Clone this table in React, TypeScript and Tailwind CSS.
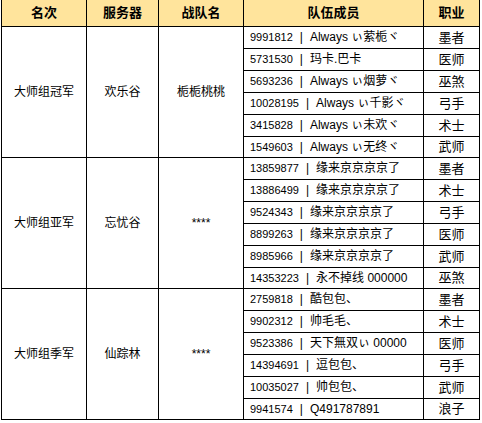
import React from 'react';

type Group = {
  rank: string;
  server: string;
  team: string;
  members: { id: string; name: string; job: string }[];
};

const groups: Group[] = [
  {
    rank: '大师组冠军',
    server: '欢乐谷',
    team: '栀栀桃桃',
    members: [
      { id: '9991812', name: 'Always ぃ萦栀ヾ', job: '墨者' },
      { id: '5731530', name: '玛卡.巴卡', job: '医师' },
      { id: '5693236', name: 'Always ぃ烟萝ヾ', job: '巫煞' },
      { id: '10028195', name: 'Always ぃ千影ヾ', job: '弓手' },
      { id: '3415828', name: 'Always ぃ未欢ヾ', job: '术士' },
      { id: '1549603', name: 'Always ぃ无终ヾ', job: '武师' },
    ],
  },
  {
    rank: '大师组亚军',
    server: '忘忧谷',
    team: '****',
    members: [
      { id: '13859877', name: '缘来京京京京了', job: '墨者' },
      { id: '13886499', name: '缘来京京京京了', job: '术士' },
      { id: '9524343', name: '缘来京京京京了', job: '弓手' },
      { id: '8899263', name: '缘来京京京京了', job: '医师' },
      { id: '8985966', name: '缘来京京京京了', job: '武师' },
      { id: '14353223', name: '永不掉线 000000', job: '巫煞' },
    ],
  },
  {
    rank: '大师组季军',
    server: '仙踪林',
    team: '****',
    members: [
      { id: '2759818', name: '酷包包、', job: '墨者' },
      { id: '9902312', name: '帅毛毛、', job: '术士' },
      { id: '9523386', name: '天下無双ぃ 00000', job: '医师' },
      { id: '14394691', name: '逗包包、', job: '弓手' },
      { id: '10035027', name: '帅包包、', job: '武师' },
      { id: '9941574', name: 'Q491787891', job: '浪子' },
    ],
  },
];

const rowH = ['h-[22px]', 'h-[22px]', 'h-[22px]', 'h-[22px]', 'h-[22px]', 'h-[21px]'];

export default function App() {
  return (
    <div className="w-[482px] h-[423px] bg-white pl-px overflow-hidden">
      <table
        className="border-collapse text-[12px] text-black leading-none"
        style={{ fontFamily: '"Liberation Sans", "Noto Sans CJK SC", sans-serif' }}
      >
        <colgroup>
          <col className="w-[85px]" />
          <col className="w-[72px]" />
          <col className="w-[85px]" />
          <col className="w-[180px]" />
          <col className="w-[56px]" />
        </colgroup>
        <thead>
          <tr className="h-[26px] bg-[#ffe49c] font-bold text-[13px]">
            <th className="border border-t-0 border-black">名次</th>
            <th className="border border-t-0 border-black">服务器</th>
            <th className="border border-t-0 border-black">战队名</th>
            <th className="border border-t-0 border-black">队伍成员</th>
            <th className="border border-t-0 border-black">职业</th>
          </tr>
        </thead>
        <tbody>
          {groups.map((g) =>
            g.members.map((m, i) => (
              <tr key={g.rank + m.id} className={rowH[i]}>
                {i === 0 && (
                  <>
                    <td rowSpan={6} className="border border-black text-center">{g.rank}</td>
                    <td rowSpan={6} className="border border-black text-center">{g.server}</td>
                    <td rowSpan={6} className="border border-black text-center">{g.team}</td>
                  </>
                )}
                <td className="border border-black pl-[6px] whitespace-nowrap">
                  <span className="text-[11px]">{m.id}</span>
                  <span className="mx-[7px]">|</span>
                  <span>{m.name}</span>
                </td>
                <td className="border border-black text-center text-[13px]">{m.job}</td>
              </tr>
            ))
          )}
        </tbody>
      </table>
    </div>
  );
}
